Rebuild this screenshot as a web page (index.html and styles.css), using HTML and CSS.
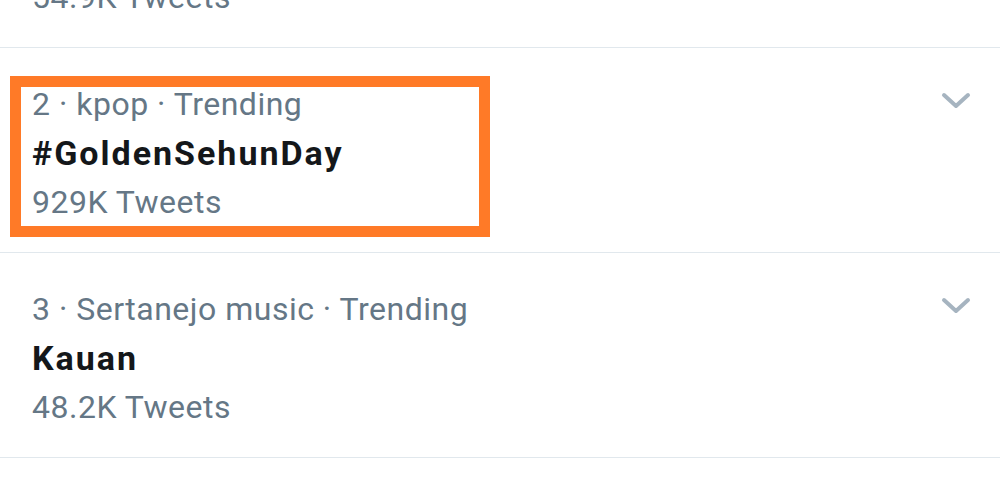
FILE: index.html
```html
<!DOCTYPE html>
<html>
<head>
<meta charset="utf-8">
<link rel="stylesheet" href="styles.css">
</head>
<body>
<div class="list">
  <div class="item partial">
    <div class="text">
      <div class="meta">54.9K Tweets</div>
    </div>
  </div>
  <div class="item">
    <div class="text">
      <div class="meta">2 · kpop · Trending</div>
      <div class="title">#GoldenSehunDay</div>
      <div class="meta">929K Tweets</div>
    </div>
    <svg class="chev" viewBox="0 0 30 18" width="30" height="18"><path d="M3 3 L15 14 L27 3" fill="none" stroke="#a6b4c0" stroke-width="4" stroke-linecap="round" stroke-linejoin="round"/></svg>
    <div class="highlight"></div>
  </div>
  <div class="item">
    <div class="text">
      <div class="meta">3 · Sertanejo music · Trending</div>
      <div class="title">Kauan</div>
      <div class="meta">48.2K Tweets</div>
    </div>
    <svg class="chev" viewBox="0 0 30 18" width="30" height="18"><path d="M3 3 L15 14 L27 3" fill="none" stroke="#a6b4c0" stroke-width="4" stroke-linecap="round" stroke-linejoin="round"/></svg>
  </div>
</div>
</body>
</html>
```

FILE: styles.css
```css
html, body {
  margin: 0;
  padding: 0;
  background: #ffffff;
  overflow: hidden;
}
body {
  font-family: Roboto, "Noto Sans", sans-serif;
  width: 1000px;
  height: 495px;
}
.list {
  margin-top: -27px;
}
.item {
  position: relative;
  display: flex;
  justify-content: space-between;
  align-items: flex-start;
  padding: 32px 29px 25px 32px;
  border-bottom: 1px solid #e1e8ed;
}
.item.partial {
  padding-top: 0;
}
.text {
  line-height: 49px;
}
.meta {
  color: #657786;
  font-size: 32px;
  letter-spacing: 0.5px;
}
.title {
  color: #14171a;
  font-size: 34px;
  font-weight: bold;
  letter-spacing: 2px;
}
.chev {
  margin-top: 12px;
}
.highlight {
  position: absolute;
  left: 10px;
  top: 28px;
  width: 458px;
  height: 139px;
  border: 11px solid #ff7a27;
  pointer-events: none;
}
```
